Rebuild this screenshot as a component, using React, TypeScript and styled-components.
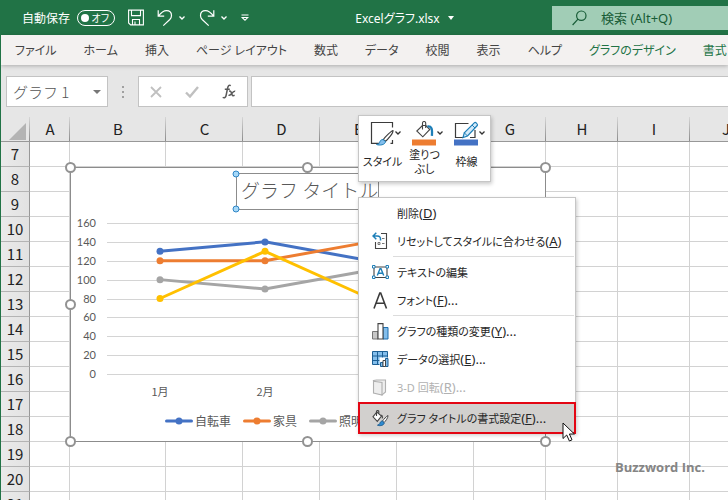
import React from "react";
import styled, { createGlobalStyle, css } from "styled-components";

const uiFont = `"Noto Sans", "Noto Sans CJK JP", sans-serif`;
const sheetFont = `"Noto Sans CJK JP", sans-serif`;
const green = "#217346";

const GlobalStyle = createGlobalStyle`
  * { box-sizing: border-box; }
  body { margin: 0; font-family: ${uiFont}; font-size: 12px; color: #262626; overflow: hidden; }
  button, input { font: inherit; color: inherit; }
  button { background: none; border: 0; padding: 0; }
`;

const AppWindow = styled.div`
  position: relative;
  display: flex;
  flex-direction: column;
  height: 100vh;
  overflow: hidden;
  background: #e6e6e6;
  border-left: 1px solid ${green};
  font-feature-settings: "palt";
`;

/* ---------- title bar ---------- */

const TitleBar = styled.header`
  display: flex;
  align-items: center;
  flex: none;
  height: 35px;
  padding-left: 21px;
  background: ${green};
  color: #fff;
`;

const AutoSave = styled.label`
  display: flex;
  align-items: center;
  gap: 7px;
  white-space: nowrap;
  font-feature-settings: normal;
`;

const Switch = styled.span`
  position: relative;
  display: flex;
  align-items: center;
  justify-content: flex-end;
  width: 38px;
  height: 16px;
  padding-right: 5px;
  border: 1px solid #fff;
  border-radius: 8px;
  font-size: 10px;
  font-feature-settings: "palt";

  input {
    position: absolute;
    inset: 0;
    margin: 0;
    opacity: 0;
  }
  &::before {
    content: "";
    width: 8px;
    height: 8px;
    margin-right: auto;
    margin-left: 3px;
    border-radius: 50%;
    background: #fff;
  }
`;

const QuickAccess = styled.div`
  display: flex;
  align-items: center;
  gap: 5px;
  margin-left: 13px;

  svg { display: block; }
`;

const QuickButton = styled.button<{ $wide?: boolean }>`
  margin-right: ${(p) => (p.$wide ? 8 : 0)}px;
`;

const FileName = styled.button`
  display: flex;
  align-items: center;
  justify-content: center;
  gap: 8px;
  flex: 1;
  padding-left: 8px;
  white-space: nowrap;
`;

const SearchBox = styled.label`
  display: flex;
  align-items: center;
  gap: 14px;
  flex: 0 0 176px;
  height: 24px;
  padding-left: 20px;
  background: #a1cdb6;
  color: #185c37;

  svg { flex: none; }
  input {
    width: 110px;
    padding: 0;
    border: 0;
    background: none;
    outline: 0;
    font-size: 13px;
  }
  input::placeholder { color: #185c37; opacity: 1; }
`;

/* ---------- ribbon tabs ---------- */

const RibbonTabs = styled.nav`
  position: relative;
  display: flex;
  align-items: center;
  gap: 27px;
  flex: none;
  height: 30px;
  padding-left: 14px;
  background: #f3f1f0;
  box-shadow: 0 1px 4px rgba(0, 0, 0, 0.25);
`;

const Tab = styled.button<{ $context?: boolean }>`
  flex: none;
  font-size: 12px;
  white-space: nowrap;
  color: ${(p) => (p.$context ? green : "#444")};
`;

/* ---------- formula bar ---------- */

const FormulaBar = styled.div`
  display: flex;
  align-items: stretch;
  flex: none;
  height: 52px;
  padding: 11px 0 10px 5px;
`;

const NameBox = styled.div`
  display: flex;
  align-items: center;
  width: 102px;
  padding: 0 6px;
  border: 1px solid #c3c3c3;
  background: #fff;

  input {
    flex: 1;
    min-width: 0;
    padding: 0;
    border: 0;
    outline: 0;
    background: none;
    color: #555;
    font: 300 15px ${sheetFont};
    font-feature-settings: normal;
  }
  svg { display: block; }
`;

const Grip = styled.div`
  display: flex;
  align-items: center;
  justify-content: center;
  width: 30px;
`;

const FormulaActions = styled.div`
  display: flex;
  align-items: center;
  justify-content: space-around;
  width: 110px;
  margin-right: 3px;
  border: 1px solid #c3c3c3;
  background: #fff;

  svg { display: block; }
`;

const FormulaInput = styled.input`
  flex: 1;
  min-width: 0;
  border: 1px solid #c3c3c3;
  border-right: 0;
  background: #fff;
  outline: 0;
`;

/* ---------- sheet ---------- */

const Sheet = styled.main`
  position: relative;
  flex: 1;
`;

const Grid = styled.table`
  border-collapse: separate;
  border-spacing: 0;
  table-layout: fixed;
  width: 0;
  background: #fff;
  font-family: ${sheetFont};
  font-size: 15px;
  line-height: 20px;
  color: #222;

  th, td { padding: 0; text-align: center; font-weight: 400; }
  td {
    height: 25px;
    border-right: 1px solid #d2d2d2;
    border-bottom: 1px solid #d2d2d2;
  }
`;

const ColumnHead = styled.th`
  height: 25px;
  border-bottom: 1px solid #989898;
  background:
    linear-gradient(#d6d6d6, #8c8c8c) right / 1px 100% no-repeat,
    #e6e6e6;
`;

const RowHead = styled.th`
  height: 25px;
  border-right: 1px solid #989898;
  border-bottom: 1px solid #b4b4b4;
  background: linear-gradient(90deg, #eaeaea, #e2e2e2);
`;

const Corner = styled(ColumnHead)`
  svg { display: block; margin: 4px 4px 0 auto; }
`;

/* ---------- chart ---------- */

const ChartFrame = styled.figure`
  position: absolute;
  left: 69px;
  top: 50px;
  width: 476px;
  height: 275px;
  margin: 0;
  background: #fff;
  font-family: ${sheetFont};
`;

const ChartDrawing = styled.svg`
  position: absolute;
  inset: 0;
  overflow: visible;

  text { fill: #595959; font-size: 11px; }
`;

const AxisText = styled.text`
  font-family: Lato, sans-serif;
`;

const ChartTitle = styled.figcaption`
  position: absolute;
  left: 166px;
  top: 6px;
  width: 143px;
  height: 37px;
  padding-left: 4px;
  border: 1px solid #8c8c8c;
  color: #595959;
  font-size: 19px;
  font-weight: 300;
  line-height: 31px;
  font-feature-settings: normal;
  white-space: nowrap;
`;

const Legend = styled.ul`
  position: absolute;
  left: 95px;
  bottom: 12px;
  display: flex;
  gap: 12px;
  margin: 0;
  padding: 0;
  list-style: none;
  color: #595959;
  line-height: 18px;

  li { display: flex; align-items: center; gap: 2px; white-space: nowrap; }
`;

/* ---------- floating toolbar and menu ---------- */

const floating = css`
  position: absolute;
  background: #fff;
  border: 1px solid #c6c6c6;
  box-shadow: 1px 2px 4px rgba(0, 0, 0, 0.22);
`;

const MiniToolbar = styled.div`
  ${floating}
  left: 357px;
  top: 115px;
  display: flex;
  gap: 1px;
  padding: 5px 3px 3px 3px;
`;

const MiniButton = styled.button`
  display: flex;
  flex-direction: column;
  align-items: center;
  width: 41px;
  height: 57px;
  font-size: 11px;
  line-height: 14px;
  white-space: nowrap;

  svg { display: block; flex: none; margin-left: 6px; }
  span { display: flex; align-items: center; flex: 1; }
`;

const Menu = styled.div`
  ${floating}
  left: 357px;
  top: 197px;
  display: flex;
  flex-direction: column;
  width: 218px;
  padding: 1px 1px 0;
`;

const MenuItem = styled.button<{ $active?: boolean }>`
  display: flex;
  align-items: center;
  gap: 8px;
  height: 28px;
  padding-left: 12px;
  text-align: left;
  white-space: nowrap;
  color: #262626;
  &:disabled { color: #b1b1b1; }

  svg { display: block; flex: none; }
  ${(p) =>
    p.$active &&
    css`
      background: #d2d0ce;
      outline: 2px solid #e30613;
    `}
`;

const IconSlot = styled.span`
  width: 17px;
  flex: none;
`;

const ItemLabel = styled.span`
  font-size: 11px;
`;

const AccessKey = styled.span`
  font-size: 13px;
`;

const Separator = styled.hr`
  width: calc(100% - 33px);
  margin: 1px 0 1px auto;
  border: 0;
  border-top: 1px solid #dcdcdc;
`;

const Pointer = styled.svg`
  position: absolute;
  left: 561px;
  top: 422px;
`;

const Watermark = styled.div`
  position: absolute;
  left: 614px;
  top: 458px;
  color: #858585;
  font: 700 13px/18px "Open Sans", sans-serif;
`;

/* ---------- icons ---------- */

const Chevron = ({ color = "#fff" }) => (
  <svg width="8" height="6" viewBox="0 0 8 6" fill="none" stroke={color} strokeWidth="1.3">
    <path d="M1.5 1.5 4 4l2.5-2.5" />
  </svg>
);

const SaveIcon = () => (
  <svg width="16" height="17" viewBox="0 0 16 17" fill="none" stroke="#fff" strokeWidth="1.1">
    <path d="M.6 1.1h14.8v14.8H2.6l-2-2zM3.5 1.1v5.5h9V1.1M4.5 15.9v-5.4h7v5.4M7 12.5v3.4" />
  </svg>
);

const UndoIcon = () => (
  <svg width="16" height="18" viewBox="0 0 16 18" fill="none" stroke="#fff" strokeWidth="1.2">
    <path d="M1.2 1.2v6h6M1.4 7C4 3.6 6.5 1.6 9.5 1.6c3 0 5 2 5 4.9 0 1.7-.6 2.9-1.7 4L6.3 16.6" />
  </svg>
);

const RedoIcon = () => (
  <svg width="16" height="18" viewBox="0 0 16 18" fill="none" stroke="#fff" strokeWidth="1.2">
    <path d="M14.8 1.2v6h-6M14.6 7C12 3.6 9.5 1.6 6.5 1.6c-3 0-5 2-5 4.9 0 1.7.6 2.9 1.7 4l6.5 6.1" />
  </svg>
);

const CustomizeIcon = () => (
  <svg width="8" height="8" viewBox="0 0 8 8" fill="none" stroke="#fff" strokeWidth="1.1">
    <path d="M.5 1h7M1.2 3.5 4 6.3l2.8-2.8z" />
  </svg>
);

const SearchIcon = () => (
  <svg width="15" height="16" viewBox="0 0 15 16" fill="none" stroke="#185c37" strokeWidth="1.2">
    <circle cx="9.3" cy="5.7" r="4.7" />
    <path d="M6 9.2.6 15" />
  </svg>
);

const Caret = ({ color = "#fff", width = 6 }) => (
  <svg width={width} height="4" viewBox="0 0 8 4" preserveAspectRatio="none">
    <path d="M0 0h8L4 4z" fill={color} />
  </svg>
);

const StyleIcon = () => (
  <svg width="32" height="25" viewBox="0 0 32 25" fill="none">
    <path d="M10 22.4H1.5V1.5h21v5M22.5 19v3.4h-2" stroke="#3b3b3b" strokeWidth="1.2" />
    <path d="M23 9.5c-1.5.2-8 6.5-9.7 9l2 2C17.8 18.5 23.5 12 23 9.5z" fill="#fff" stroke="#3b3b3b" strokeWidth="1.1" />
    <path d="M13 18.5c-2.5.2-3 1.7-3.5 3.2-.4 1-1.5 1.5-3 1.8 3 1.2 8.8.5 9-3z" fill="#83beec" stroke="#1e7fb8" />
    <path d="m25.5 10.5 2.5 2.5 2.5-2.5" stroke="#333" strokeWidth="1.3" />
  </svg>
);

const FillIcon = () => (
  <svg width="32" height="25" viewBox="0 0 32 25" fill="none">
    <path d="M10.500 4.500 4.800 10l6 5.800 7-7.300-4-4z" fill="#fff" stroke="#444" strokeWidth="1.1" />
    <path d="M10.500 8.500V2c0-2 3.200-2 3.200 0v5" stroke="#444" strokeWidth="1.1" />
    <path d="M15.500 5.500c4-.5 5 2 4.400 9.300" stroke="#1e7fb8" strokeWidth="2.3" />
    <path d="m25.500 10.500 2.500 2.500 2.500-2.500" stroke="#333" strokeWidth="1.3" />
    <path d="M0 18.500h24v6H0z" fill="#ed7d31" />
  </svg>
);

const OutlineIcon = () => (
  <svg width="32" height="25" viewBox="0 0 32 25" fill="none">
    <path d="M14.500 2.500h-13v14H9M21 9v7.500h-5" stroke="#3b3b3b" strokeWidth="1.2" />
    <path d="m9 16.500 1.300-4.700L20.500 1.600c1-.9 3.800 1.800 2.800 2.900L13.500 15z" fill="#d4eaf9" stroke="#1e7fb8" strokeWidth="1.2" />
    <path d="m18 4 3 3M10.300 11.800l3.200 3.200" stroke="#1e7fb8" />
    <path d="m25.500 10.500 2.500 2.500 2.500-2.500" stroke="#333" strokeWidth="1.3" />
    <path d="M0 18.500h24v6H0z" fill="#4472c4" />
  </svg>
);

const ResetIcon = () => (
  <svg width="17" height="18" viewBox="0 0 17 18" fill="none">
    <path d="M9 1.500h5.500v15h-11V10" stroke="#444" strokeWidth="1.1" />
    <path d="M4.300.8 1 4l3.300 3.200M1.300 4H5c3 0 3.800 1.500 3.500 4.500" stroke="#1e7fb8" strokeWidth="1.5" />
    <path d="M10 6.500h2.500M6 10.500h2v2H6zM10 11.500h2.500" stroke="#777" />
  </svg>
);

const TextBoxIcon = () => (
  <svg width="17" height="14" viewBox="0 0 17 14" fill="none">
    <path d="M2 2h13v10.500H2z" stroke="#444" strokeWidth="1.1" />
    <path d="M5.300 10.500 8 3.800h1l2.700 6.700M6.300 8.300h4.400" stroke="#1e7fb8" strokeWidth="1.4" />
    <path d="M.5.500h2.500V3H.5zM14 .5h2.500V3H14zM.5 11h2.500v2.500H.5zM14 11h2.500v2.500H14z" fill="#fff" stroke="#1e7fb8" />
  </svg>
);

const FontIcon = () => (
  <svg width="17" height="17" viewBox="0 0 17 17" fill="none" stroke="#3b3b3b" strokeWidth="1.6">
    <path d="M2 16.500 7.800 1h.9l5.800 15.500M4 11.200h8.500" />
  </svg>
);

const ChartTypeIcon = () => (
  <svg width="17" height="17" viewBox="0 0 17 17">
    <path d="M.5 8.500H6v7.500H.5z" fill="#c8c8c8" stroke="#777" />
    <path d="M11 4.500h5V16h-5z" fill="#83beec" stroke="#1e6fae" />
    <path d="M6 .6h5V16H6z" fill="#fff" stroke="#444" strokeWidth="1.1" />
  </svg>
);

const DataIcon = () => (
  <svg width="17" height="16" viewBox="0 0 17 16">
    <path d="M.5.500h15v13H.5z" fill="#83beec" stroke="#1c5f94" />
    <path d="M.5 5h15M.5 9.500h15M5.500.500v13M10.500.500v13" stroke="#1c5f94" />
    <path d="M7.500 6.500H17V16H7.500z" fill="#fff" />
    <path d="M8.500 11.500h2.500v4H8.500zM13.500 7.500H16v8h-2.500z" fill="#83beec" stroke="#1c5f94" />
    <path d="M11 9.500h2.500v6H11z" fill="#fff" stroke="#444" />
  </svg>
);

const RotateIcon = () => (
  <svg width="17" height="17" viewBox="0 0 17 17" fill="#eee" stroke="#b0b0b0" strokeWidth="1.1">
    <path d="M1.500 1.500 4.500 1h9v12l-3.500 3z" />
    <path d="M1.500 2.200 10 3.500V16l-8.500-2z" />
  </svg>
);

const FormatIcon = () => (
  <svg width="18" height="17" viewBox="0 0 18 17" fill="none">
    <path d="M4.800 2 1 6.800l4.300 4.500L9.500 6z" fill="#fff" stroke="#444" strokeWidth="1.1" />
    <path d="M4.500 6V1.500C4.500.2 6.800.2 6.800 1.500V3.500M9.300 5c1.200.7 1.300 1.700 1 3.300" stroke="#444" strokeWidth="1.1" />
    <path d="M16 5.500c-1.500.8-4.500 4-5.500 5.500l1.500 1.500C13.500 11.200 16.200 7.800 16 5.500z" fill="#fff" stroke="#444" />
    <path d="M10.300 11c-1.700.1-2.100 1.500-2.500 2.500-.3.900-1.100 1.400-2.300 1.700 2.500 1 6.600.3 6.700-2.400z" fill="#2f8bd0" stroke="#1c5f94" />
  </svg>
);

/* ---------- data ---------- */

const tabs = ["ファイル", "ホーム", "挿入", "ページ レイアウト", "数式", "データ", "校閲", "表示", "ヘルプ"];
const contextTabs = ["グラフのデザイン", "書式"];

const columns = [
  ["A", 40], ["B", 96], ["C", 77], ["D", 77], ["E", 77],
  ["F", 77], ["G", 72], ["H", 72], ["I", 72], ["J", 72],
] as const;
const rows = Array.from({ length: 15 }, (_, i) => i + 7);

const series = [
  { name: "自転車", color: "#4472c4", values: [130, 140, 120] },
  { name: "家具", color: "#ed7d31", values: [120, 120, 140] },
  { name: "照明", color: "#a5a5a5", values: [100, 90, 110] },
  { name: "", color: "#ffc000", values: [80, 130, 80] },
];
const ticks = [0, 20, 40, 60, 80, 100, 120, 140, 160];
const xAt = (i: number) => 90 + i * 105;
const yAt = (v: number) => 207 - (v * 151) / 160;
const handles = [[0, 0], [237, 0], [475, 0], [0, 137], [475, 137], [0, 274], [237, 274], [475, 274]];

const ChartObject = () => (
  <ChartFrame>
    <ChartDrawing width="476" height="275" viewBox="0 0 476 275" aria-label="折れ線グラフ">
      {ticks.map((t) => (
        <g key={t}>
          <path d={`M37 ${Math.round(yAt(t)) + 0.5}H458`} stroke="#d4d4d4" />
          <AxisText x="26" y={yAt(t) + 4} textAnchor="end">{t}</AxisText>
        </g>
      ))}
      {["1月", "2月"].map((m, i) => (
        <text key={m} x={xAt(i)} y="229" textAnchor="middle">{m}</text>
      ))}
      {series.map((s) => (
        <g key={s.color} fill={s.color}>
          <polyline
            points={s.values.map((v, i) => `${xAt(i)},${yAt(v)}`).join(" ")}
            fill="none"
            stroke={s.color}
            strokeWidth="3"
          />
          {s.values.map((v, i) => (
            <circle key={i} cx={xAt(i)} cy={yAt(v)} r="3.5" />
          ))}
        </g>
      ))}
      <path d="M.5.5h475v274H.5z" fill="none" stroke="#8c8c8c" />
      {handles.map(([x, y]) => (
        <circle key={`${x}-${y}`} cx={x + 0.5} cy={y + 0.5} r="4.5" fill="#fff" stroke="#929292" strokeWidth="2" />
      ))}
    </ChartDrawing>
    <ChartTitle>グラフ タイトル</ChartTitle>
    <ChartDrawing width="476" height="50" viewBox="0 0 476 50" aria-hidden="true">
      {[7, 42].map((y) => (
        <circle key={y} cx="166" cy={y} r="3" fill="#a6d8f8" stroke="#2f86c6" />
      ))}
    </ChartDrawing>
    <Legend>
      {series.filter((s) => s.name).map((s) => (
        <li key={s.name}>
          <svg width="28" height="8" viewBox="0 0 28 8" fill={s.color}>
            <path d="M1.5 4h25" stroke={s.color} strokeWidth="3" strokeLinecap="round" />
            <circle cx="14" cy="4" r="3.5" />
          </svg>
          {s.name}
        </li>
      ))}
    </Legend>
  </ChartFrame>
);

const Item = ({ icon, text, keyName, dots, ...rest }: {
  icon?: React.ReactNode; text: string; keyName?: string; dots?: boolean; disabled?: boolean; $active?: boolean;
}) => (
  <MenuItem role="menuitem" {...rest}>
    <IconSlot>{icon}</IconSlot>
    <ItemLabel>
      {text}
      {keyName && <AccessKey>(<u>{keyName}</u>){dots && "..."}</AccessKey>}
    </ItemLabel>
  </MenuItem>
);

export default function App() {
  return (
    <AppWindow>
      <GlobalStyle />
      <TitleBar>
        <AutoSave>
          自動保存
          <Switch><input type="checkbox" role="switch" aria-label="自動保存" />オフ</Switch>
        </AutoSave>
        <QuickAccess>
          <QuickButton $wide aria-label="保存"><SaveIcon /></QuickButton>
          <QuickButton aria-label="元に戻す"><UndoIcon /></QuickButton>
          <QuickButton $wide aria-label="元に戻す一覧"><Chevron /></QuickButton>
          <QuickButton aria-label="やり直し"><RedoIcon /></QuickButton>
          <QuickButton $wide aria-label="やり直し一覧"><Chevron /></QuickButton>
          <QuickButton aria-label="ツールバーの設定"><CustomizeIcon /></QuickButton>
        </QuickAccess>
        <FileName>Excelグラフ.xlsx<Caret /></FileName>
        <SearchBox>
          <SearchIcon />
          <input type="search" placeholder="検索 (Alt+Q)" aria-label="検索" />
        </SearchBox>
      </TitleBar>

      <RibbonTabs>
        {tabs.map((t) => <Tab key={t}>{t}</Tab>)}
        {contextTabs.map((t) => <Tab key={t} $context>{t}</Tab>)}
      </RibbonTabs>

      <FormulaBar>
        <NameBox>
          <input defaultValue="グラフ 1" aria-label="名前ボックス" />
          <button aria-label="名前の一覧"><Caret color="#777" width={8} /></button>
        </NameBox>
        <Grip>
          <svg width="2" height="12" viewBox="0 0 2 12" fill="#a0a0a0">
            <path d="M0 0h2v2H0zM0 5h2v2H0zM0 10h2v2H0z" />
          </svg>
        </Grip>
        <FormulaActions>
          <button aria-label="キャンセル">
            <svg width="12" height="12" viewBox="0 0 12 12" stroke="#c0c0c0" strokeWidth="1.8"><path d="m1 1 10 10M11 1 1 11" /></svg>
          </button>
          <button aria-label="入力">
            <svg width="14" height="12" viewBox="0 0 14 12" fill="none" stroke="#c0c0c0" strokeWidth="2.4"><path d="m1 6.500 4 4L13 1" /></svg>
          </button>
          <button aria-label="関数の挿入">
            <svg width="14" height="15" viewBox="0 0 14 15" fill="none" stroke="#5a5a5a" strokeWidth="1.5">
              <path d="M8.800 1.600C6.800.5 6 2 5.500 4.500L4.200 11c-.4 2.200-1.500 3.300-3.500 2.400M2.800 5.300h5M7 7.300c1.800-.6 2 .2 2.600 2.200.6 2.200 1.200 2.600 3 1.800M13.200 7.300c-1.500-.5-2.300.6-3.400 2.200-1 1.500-1.800 2.200-3.300 1.700" />
            </svg>
          </button>
        </FormulaActions>
        <FormulaInput aria-label="数式バー" />
      </FormulaBar>

      <Sheet>
        <Grid>
          <colgroup>
            <col width="29" />
            {columns.map(([name, width]) => <col key={name} width={width} />)}
          </colgroup>
          <thead>
            <tr>
              <Corner aria-label="すべて選択">
                <svg width="17" height="17" viewBox="0 0 17 17"><path d="M17 0v17H0z" fill="#b4b4b4" /></svg>
              </Corner>
              {columns.map(([name]) => <ColumnHead key={name} scope="col">{name}</ColumnHead>)}
            </tr>
          </thead>
          <tbody>
            {rows.map((r) => (
              <tr key={r}>
                <RowHead scope="row">{r}</RowHead>
                {columns.map(([name]) => <td key={name} />)}
              </tr>
            ))}
          </tbody>
        </Grid>
        <ChartObject />
      </Sheet>

      <Watermark>Buzzword Inc.</Watermark>

      <MiniToolbar role="toolbar">
        <MiniButton><StyleIcon /><span>スタイル</span></MiniButton>
        <MiniButton><FillIcon /><span>塗りつ<br />ぶし</span></MiniButton>
        <MiniButton><OutlineIcon /><span>枠線</span></MiniButton>
      </MiniToolbar>

      <Menu role="menu">
        <Item text="削除" keyName="D" />
        <Item icon={<ResetIcon />} text="リセットしてスタイルに合わせる" keyName="A" />
        <Separator />
        <Item icon={<TextBoxIcon />} text="テキストの編集" />
        <Item icon={<FontIcon />} text="フォント" keyName="F" dots />
        <Separator />
        <Item icon={<ChartTypeIcon />} text="グラフの種類の変更" keyName="Y" dots />
        <Item icon={<DataIcon />} text="データの選択" keyName="E" dots />
        <Item icon={<RotateIcon />} text="3-D 回転" keyName="R" dots disabled />
        <Separator />
        <Item icon={<FormatIcon />} text="グラフ タイトルの書式設定" keyName="F" dots $active />
      </Menu>

      <Pointer width="14" height="21" viewBox="0 0 14 21">
        <path d="M1 1v15.500l3.700-3.500 2.700 6 2.600-1.200-2.600-5.800h5z" fill="#fff" stroke="#111" />
      </Pointer>
    </AppWindow>
  );
}
